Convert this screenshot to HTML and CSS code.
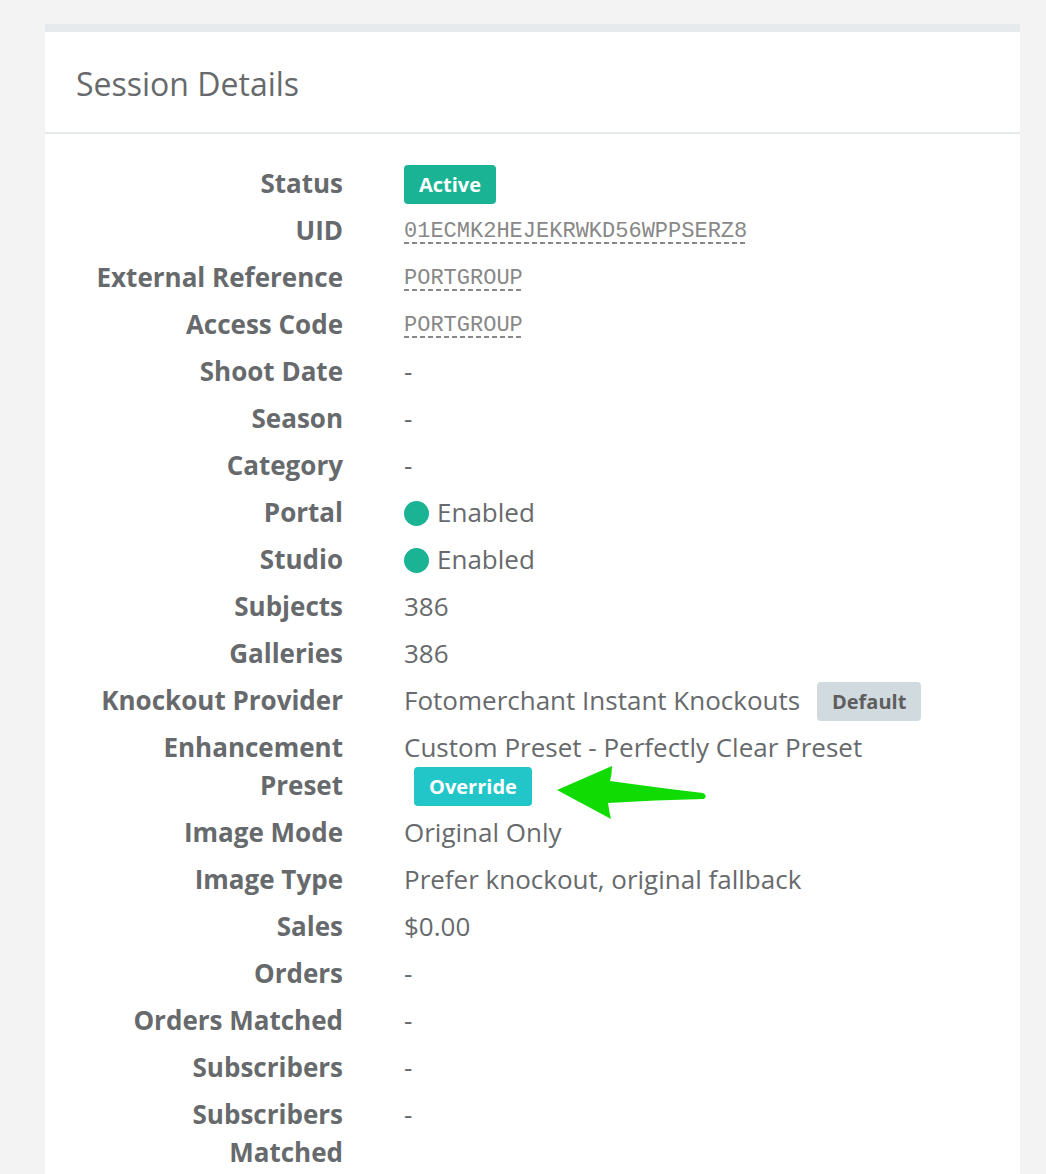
FILE: index.html
```html
<!DOCTYPE html>
<html lang="en">
<head>
  <meta charset="UTF-8">
  <title>Session Details</title>
  <link rel="stylesheet" href="styles.css">
</head>
<body>
  <div class="ibox">
    <div class="ibox-title">
      <h2>Session Details</h2>
    </div>
    <div class="ibox-content">
      <dl class="details">
        <dt>Status</dt>
        <dd><span class="badge badge-primary">Active</span></dd>
        <dt>UID</dt>
        <dd><span class="code">01ECMK2HEJEKRWKD56WPPSERZ8</span></dd>
        <dt>External Reference</dt>
        <dd><span class="code">PORTGROUP</span></dd>
        <dt>Access Code</dt>
        <dd><span class="code">PORTGROUP</span></dd>
        <dt>Shoot Date</dt>
        <dd>-</dd>
        <dt>Season</dt>
        <dd>-</dd>
        <dt>Category</dt>
        <dd>-</dd>
        <dt>Portal</dt>
        <dd><span class="dot"></span>Enabled</dd>
        <dt>Studio</dt>
        <dd><span class="dot"></span>Enabled</dd>
        <dt>Subjects</dt>
        <dd>386</dd>
        <dt>Galleries</dt>
        <dd>386</dd>
        <dt>Knockout Provider</dt>
        <dd>Fotomerchant Instant Knockouts <span class="badge badge-default">Default</span></dd>
        <dt>Enhancement<br>Preset</dt>
        <dd class="preset">
          Custom Preset - Perfectly Clear Preset<br>
          <span class="badge badge-info">Override</span>
          <svg class="arrow" width="160" height="64" viewBox="0 0 160 64">
            <path d="M7 30 L62 6 Q62 14 60 21 Q110 28 153 33 Q158 36 154 39 Q105 40 58 43 Q59 51 61 59 Z" fill="#10dc04"/>
          </svg>
        </dd>
        <dt>Image Mode</dt>
        <dd>Original Only</dd>
        <dt>Image Type</dt>
        <dd>Prefer knockout, original fallback</dd>
        <dt>Sales</dt>
        <dd>$0.00</dd>
        <dt>Orders</dt>
        <dd>-</dd>
        <dt>Orders Matched</dt>
        <dd>-</dd>
        <dt>Subscribers</dt>
        <dd>-</dd>
        <dt>Subscribers<br>Matched</dt>
        <dd>-</dd>
      </dl>
    </div>
  </div>
</body>
</html>
```

FILE: styles.css
```css
body {
  margin: 0;
  padding: 24px 0 0 45px;
  background-color: #f3f3f4;
  font-family: "Open Sans", "Liberation Sans", sans-serif;
  color: #676a6c;
}
.ibox {
  width: 975px;
  background-color: #fff;
  border-top: 8px solid #e7eaec;
}
.ibox-title {
  padding: 32px 31px 28px;
  border-bottom: 2px solid #e7eaec;
}
.ibox-title h2 {
  margin: 0;
  font-size: 32px;
  font-weight: 400;
  line-height: 40px;
}
.ibox-content {
  padding: 30px 30px 30px;
}
.details {
  display: grid;
  grid-template-columns: 268px 1fr;
  column-gap: 61px;
  row-gap: 9px;
  margin: 0;
  font-size: 26px;
  line-height: 38px;
}
.details dt {
  font-weight: 700;
  text-align: right;
}
.details dd {
  margin: 0;
}
.preset {
  position: relative;
}
.badge {
  display: inline-block;
  padding: 6px 15px;
  margin: 1px 0 -2px;
  border-radius: 4px;
  font-size: 20px;
  font-weight: 700;
  line-height: 27px;
  vertical-align: top;
}
.badge-primary {
  background-color: #1ab394;
  color: #fff;
}
.badge-default {
  background-color: #d1dade;
  color: #5e5e5e;
  margin-left: 10px;
}
.badge-info {
  background-color: #23c6c8;
  color: #fff;
  margin-left: 10px;
}
.code {
  font-family: "Liberation Mono", "DejaVu Sans Mono", monospace;
  font-size: 22px;
  line-height: 1;
  color: #888;
  vertical-align: 3px;
  background: linear-gradient(to right, #888 62%, transparent 62%) left bottom / 8px 2px repeat-x;
}
.dot {
  display: inline-block;
  width: 25px;
  height: 25px;
  border-radius: 50%;
  background-color: #1ab394;
  margin-right: 8px;
  vertical-align: -4px;
}
.arrow {
  position: absolute;
  left: 146px;
  top: 32px;
}
```
